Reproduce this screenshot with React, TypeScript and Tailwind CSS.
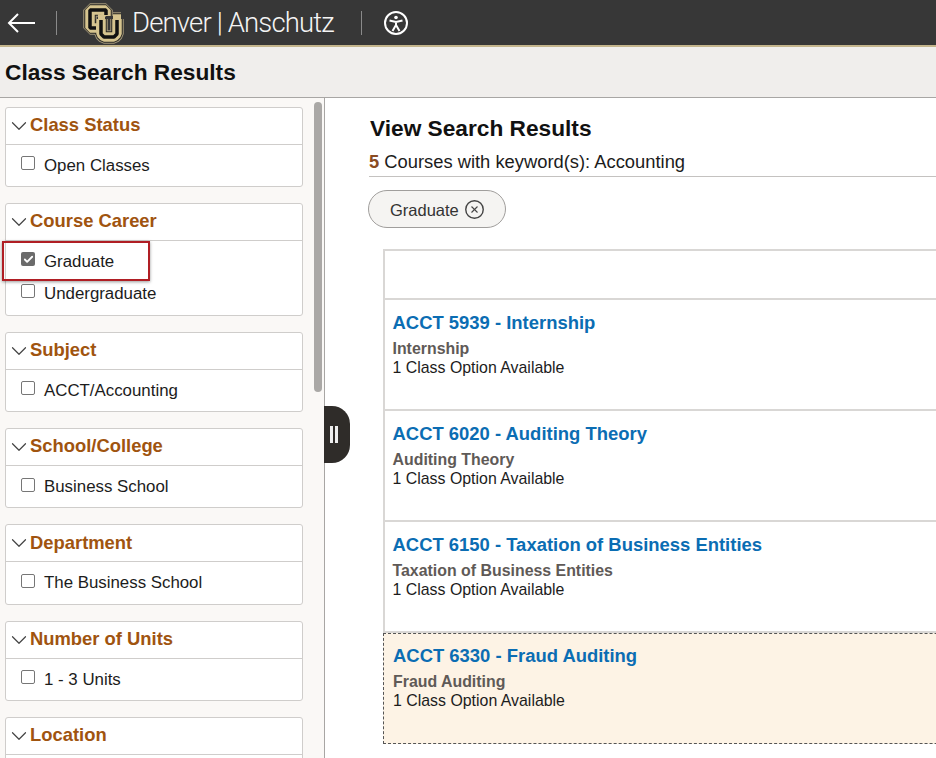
import { ChevronDown, Check, XCircle } from "lucide-react";

const filters = [
  { title: "Class Status", options: ["Open Classes"] },
  { title: "Course Career", options: ["Graduate", "Undergraduate"] },
  { title: "Subject", options: ["ACCT/Accounting"] },
  { title: "School/College", options: ["Business School"] },
  { title: "Department", options: ["The Business School"] },
  { title: "Number of Units", options: ["1 - 3 Units"] },
  { title: "Location", options: [] as string[] },
];

const courses = [
  { code: "ACCT 5939 - Internship", name: "Internship" },
  { code: "ACCT 6020 - Auditing Theory", name: "Auditing Theory" },
  { code: "ACCT 6150 - Taxation of Business Entities", name: "Taxation of Business Entities" },
  { code: "ACCT 6330 - Fraud Auditing", name: "Fraud Auditing", active: true },
];

const Logo = () => (
  <svg width="42" height="42" viewBox="0 0 42 42" fill="none" strokeLinejoin="bevel" className="shrink-0">
    <g stroke="#a2977a" strokeWidth="13.5">
      <path d="M24 14 V8 H8 V26 H15" />
      <path d="M19 17 V32 L22 35 H32 L35 32 V17 M16 17 H23 M31 17 H39" />
    </g>
    <g stroke="#2a2823" strokeWidth="11.5">
      <path d="M24 14 V8 H8 V26 H15" />
      <path d="M19 17 V32 L22 35 H32 L35 32 V17 M16 17 H23 M31 17 H39" />
    </g>
    <g stroke="#d6c48f" strokeWidth="9.5">
      <path d="M24 14 V8 H8 V26 H15" />
      <path d="M19 17 V32 L22 35 H32 L35 32 V17 M16 17 H23 M31 17 H39" />
    </g>
    <g stroke="#111111" strokeWidth="3.5">
      <path d="M24 13 V8 H8 V26 H14" />
      <path d="M19 18 V32 L22 35 H32 L35 32 V18" />
    </g>
  </svg>
);

const Checkbox = ({ checked }: { checked?: boolean }) =>
  checked ? (
    <span className="flex h-[14px] w-[14px] shrink-0 items-center justify-center rounded-[2px] bg-[#6b6b6b]">
      <Check className="h-[11px] w-[11px] text-white" strokeWidth={4} />
    </span>
  ) : (
    <span className="block h-[14px] w-[14px] shrink-0 rounded-[2px] border border-[#767676] bg-white" />
  );

export default function App() {
  return (
    <div className="relative h-[758px] w-[936px] overflow-hidden bg-white font-['Liberation_Sans',Arial,sans-serif] text-[#1c1c1c]">
      {/* Top bar */}
      <header className="flex h-[47px] items-center border-b-[2px] border-[#c4b58c] bg-[#373737]">
        <svg width="28" height="22" viewBox="0 0 28 22" fill="none" stroke="#fff" strokeWidth="2" className="ml-[7px]">
          <path d="M11 2 L2 11 L11 20 M2 11 H28" />
        </svg>
        <div className="ml-[21px] h-[24px] w-px bg-[#8a8a8a]" />
        <div className="ml-[25px]">
          <Logo />
        </div>
        <span className="ml-[8px] whitespace-nowrap font-['Roboto',sans-serif] text-[27.5px] font-light tracking-[-0.85px] text-[#f4f4f4]">
          Denver | Anschutz
        </span>
        <div className="ml-[27px] h-[24px] w-px bg-[#8a8a8a]" />
        <svg width="26" height="26" viewBox="0 0 26 26" fill="none" stroke="#fff" className="ml-[21px]">
          <circle cx="13" cy="13" r="11" strokeWidth="2" />
          <circle cx="13" cy="7.5" r="1.8" fill="#fff" stroke="none" />
          <path d="M6.5 10.5 L13 12 L19.5 10.5 M13 12 V15 M13 15 L9.5 21 M13 15 L16.5 21" strokeWidth="2" />
        </svg>
      </header>

      {/* Page title */}
      <div className="flex h-[51px] items-center border-b border-[#a8a6a4] bg-[#f0eeec] pl-[5px]">
        <h1 className="text-[22.7px] font-bold text-[#111]">Class Search Results</h1>
      </div>

      <div className="flex">
        {/* Filters */}
        <aside className="flex h-[661px] w-[325px] shrink-0 overflow-hidden border-r border-[#a8a6a4] bg-[#faf8f6]">
          <div className="ml-[5px] mt-[8.5px] flex w-[298px] shrink-0 flex-col gap-[16px]">
            {filters.map((group) => (
              <section key={group.title} className="shrink-0 rounded-[3px] border border-[#cfcdcb] bg-white">
                <div className="flex h-[37px] items-center border-b border-[#cfcdcb]">
                  <ChevronDown className="-ml-[0.5px] h-[26px] w-[26px] text-[#444]" strokeWidth={1.1} />
                  <h2 className="-ml-[1.5px] -mt-[2px] text-[18.4px] font-bold text-[#a0540f]">{group.title}</h2>
                </div>
                <div className={`flex flex-col gap-[13px] pl-[15px] pt-[11px] ${group.options.length > 1 ? "pb-[12px]" : "pb-[11.33px]"}`}>
                  {group.options.map((option) => (
                    <label key={option} className="flex h-[19px] items-center gap-[9px] text-[16.85px] leading-[19px]">
                      <span className="-mt-[4px] block">
                        <Checkbox checked={option === "Graduate"} />
                      </span>
                      {option}
                    </label>
                  ))}
                </div>
              </section>
            ))}
          </div>
          <div className="ml-[11px] mt-[4px] h-[290px] w-[8px] rounded-full bg-[#aaa8a6]" />
        </aside>

        {/* Results */}
        <main className="min-w-0 flex-1 pl-[44px]">
          <h2 className="ml-px mt-[16px] text-[22.7px] font-bold leading-[28px] text-[#111]">View Search Results</h2>
          <p className="mt-[9px] h-[26px] whitespace-nowrap border-b border-[#c4c2c0] text-[18.35px] leading-[22px]">
            <span className="font-bold text-[#8a4b22]">5</span> Courses with keyword(s): Accounting
          </p>
          <div className="-ml-[1px] mt-[13px] flex h-[38px] w-[138px] items-center rounded-full border border-[#a09e9c] bg-[#f5f4f2] pl-[21px] text-[16.5px] text-[#333]">
            <span className="pt-[2px]">Graduate</span>
            <XCircle className="ml-[5px] h-[21px] w-[21px] text-[#444]" strokeWidth={1.6} />
          </div>
          <div className="ml-[14px] mt-[21px] w-[700px] border-l-[2px] border-t-[2px] border-[#d9d7d5]">
            <div className="h-[49px] border-b-[2px] border-[#d9d7d5]" />
            {courses.map((course) => (
              <article
                key={course.code}
                className={
                  course.active
                    ? "-ml-[2px] h-[111px] border border-dashed border-[#555] bg-[#fdf3e5] pl-[9px] pt-[10px]"
                    : "h-[111px] border-b-[2px] border-[#d9d7d5] pl-[7.5px] pt-[11px]"
                }
              >
                <h3 className="text-[18.45px] font-bold leading-[24px] text-[#0b6db3]">{course.code}</h3>
                <p className="mt-[4px] text-[15.9px] font-bold leading-[19px] text-[#5f5a57]">{course.name}</p>
                <p className="text-[15.9px] leading-[19px]">1 Class Option Available</p>
              </article>
            ))}
          </div>
        </main>
      </div>

      {/* Sidebar drag handle */}
      <div className="absolute left-[324px] top-[406px] flex h-[57px] w-[26px] items-center justify-center rounded-r-[18px] bg-[#2f2c29] pr-[6px]">
        <div className="flex gap-[2px]">
          <span className="h-[17px] w-[3px] bg-[#eeeeee]" />
          <span className="h-[17px] w-[3px] bg-[#eeeeee]" />
        </div>
      </div>

      {/* Red callout */}
      <div className="absolute left-[2px] top-[241px] h-[40px] w-[148px] border-[2px] border-[#b01e24] shadow-[0_1px_3px_rgba(0,0,0,0.4)]" />
    </div>
  );
}
